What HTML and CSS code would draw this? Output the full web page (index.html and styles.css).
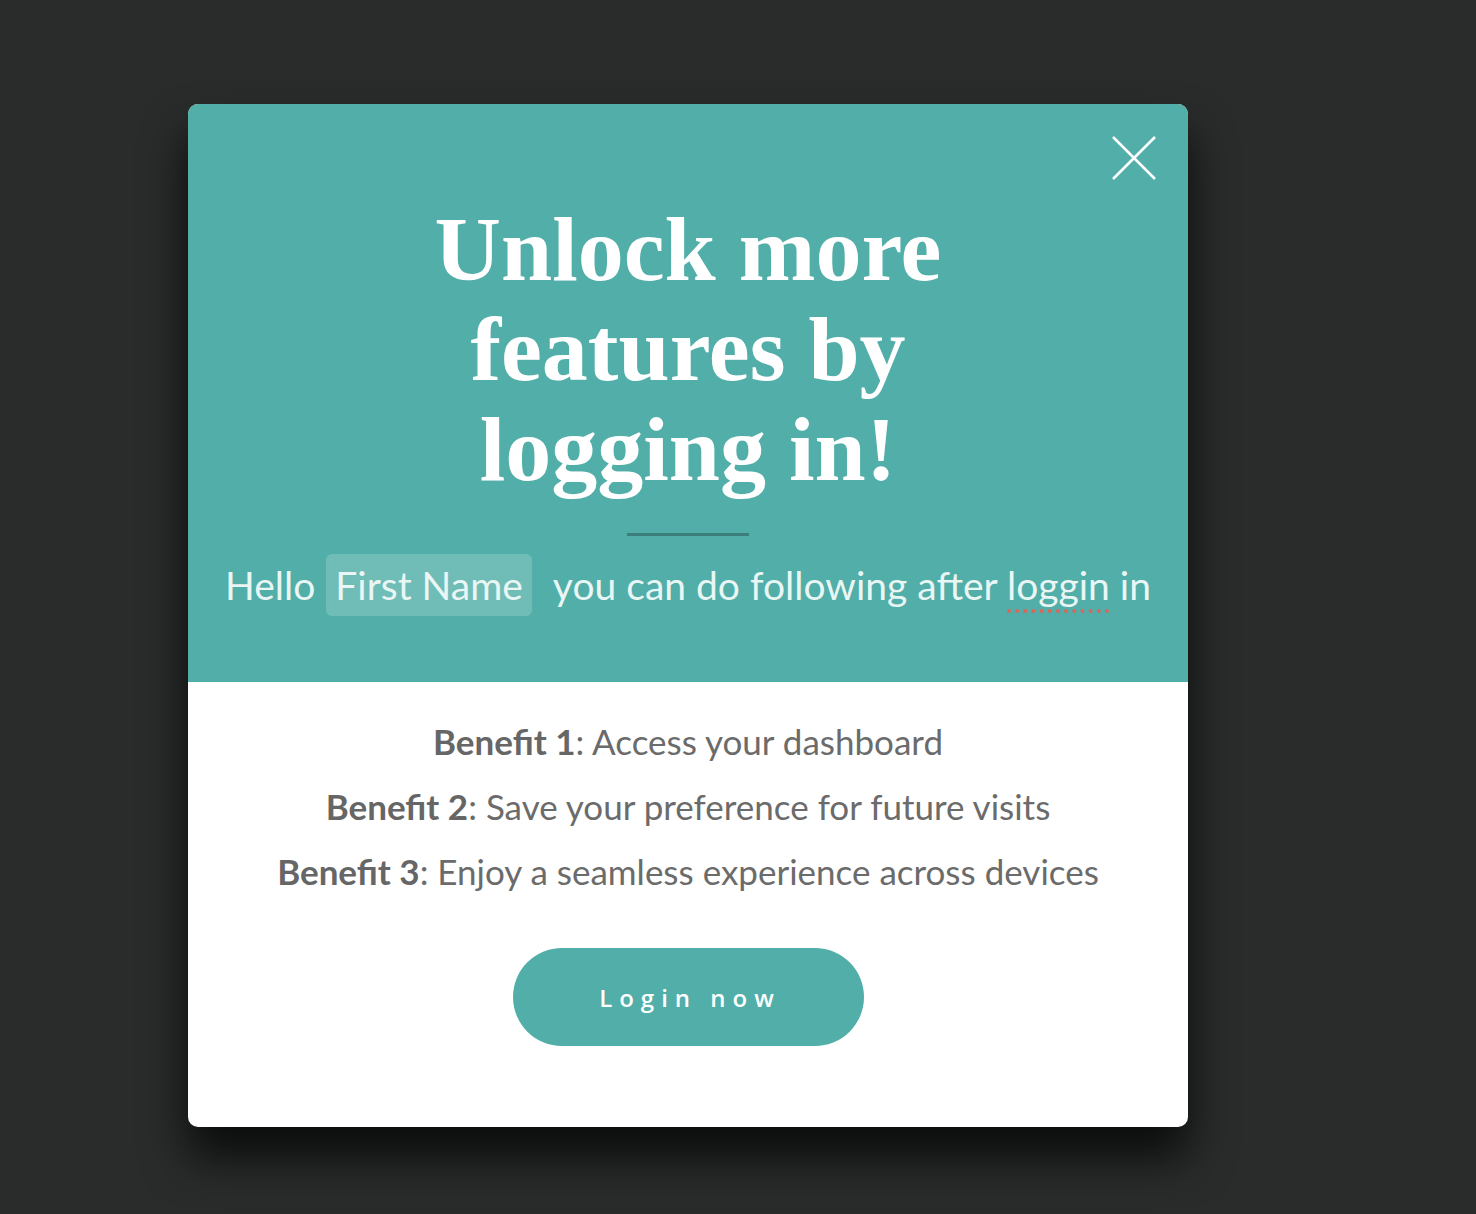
FILE: index.html
```html
<!DOCTYPE html>
<html lang="en">
  <head>
    <title>Login prompt</title>
<link rel="stylesheet" href="styles.css">
  </head>
  <body>
    <div class="page">
      <div class="modal">
        <div class="modal-top">
          <button class="close" aria-label="Close">
            <svg width="46" height="46" viewBox="0 0 46 46"><path d="M2 2 L44 44 M44 2 L2 44" stroke="#fff" stroke-width="2.6" fill="none"/></svg>
          </button>
          <h1 class="title">Unlock more features by logging in!</h1>
          <div class="divider"></div>
          <p class="hello">Hello <span class="chip">First Name</span> you can do following after <span class="typo">loggin</span> in</p>
        </div>
        <div class="modal-body">
          <p class="benefit"><b>Benefit 1</b>: Access your dashboard</p>
          <p class="benefit"><b>Benefit 2</b>: Save your preference for future visits</p>
          <p class="benefit"><b>Benefit 3</b>: Enjoy a seamless experience across devices</p>
          <button class="login">Login now</button>
        </div>
      </div>
    </div>
  </body>
</html>
```
FILE: styles.css
```css
html, body { margin: 0; background: #292c2b; }
.page { padding: 104px 0 0 188px; min-height: 1214px; box-sizing: border-box; }
.modal { width: 1000px; border-radius: 10px; overflow: hidden; background: #fff; box-shadow: 0 30px 45px rgba(0,0,0,0.75); }
.modal-top { background: #51aea8; padding: 95px 0 66px; text-align: center; position: relative; }
.close { position: absolute; top: 31px; right: 31px; border: 0; background: transparent; padding: 0; }
.title { margin: 0 auto; max-width: 600px; font-family: "Liberation Serif", serif; font-weight: bold; font-size: 92px; line-height: 100px; color: #fff; }
.divider { width: 122px; height: 3px; background: #3c7f7a; margin: 34px auto 18px; }
.hello { margin: 0; font-family: Lato, sans-serif; font-size: 39px; color: #e9f6f4; }
.chip { display: inline-block; background: rgba(255,255,255,0.18); border-radius: 6px; padding: 8px 9px; margin: 0 12px 0 1px; }
.typo { text-decoration: underline dotted #d9675c; text-underline-offset: 10px; }
.modal-body { text-align: center; padding: 38px 0 81px; font-family: Lato, sans-serif; color: #6b6b6b; }
.benefit { margin: 0 0 22px; font-size: 35px; line-height: 43px; }
.benefit b { font-weight: bold; color: #666; }
.login { margin-top: 33px; width: 351px; height: 98px; padding: 0 0 0 4px; border: 0; border-radius: 49px; background: #51aea8; color: #fff; font-family: "Open Sans", sans-serif; font-weight: 600; font-size: 24px; letter-spacing: 7px; }
```
